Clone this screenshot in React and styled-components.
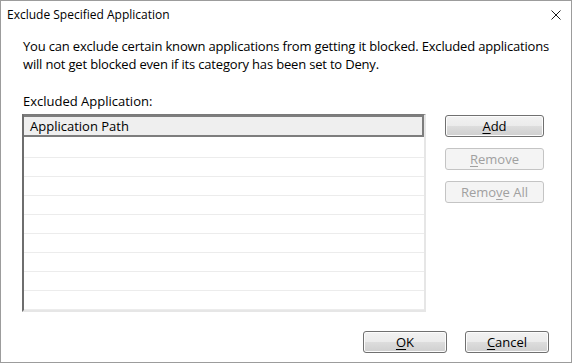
import React from 'react';
import styled, { createGlobalStyle } from 'styled-components';

const GlobalStyle = createGlobalStyle`
  html, body {
    margin: 0;
    padding: 0;
    background: #ffffff;
  }
  body {
    font-family: "Open Sans", "Noto Sans", sans-serif;
    color: #000000;
  }
`;

const rows = Array.from({ length: 9 });

function App() {
  return (
    <>
      <GlobalStyle />
      <Window>
        <TitleBar>
          <Title>Exclude Specified Application</Title>
          <CloseBtn aria-label="close">
            <svg width="10" height="10" viewBox="0 0 10 10">
              <path d="M0.5 0.5 L9.5 9.5 M9.5 0.5 L0.5 9.5" stroke="#1a1a1a" strokeWidth="1" fill="none" />
            </svg>
          </CloseBtn>
        </TitleBar>
        <Body>
          <Description>
            You can exclude certain known applications from getting it blocked. Excluded applications
            <br />
            will not get blocked even if its category has been set to Deny.
          </Description>
          <Label>Excluded Application:</Label>
          <ListRow>
            <Table>
              <HeaderCell>Application Path</HeaderCell>
              {rows.map((_, i) => (
                <Row key={i} />
              ))}
            </Table>
            <SideButtons>
              <Button>
                <u>A</u>dd
              </Button>
              <Button disabled>
                <u>R</u>emove
              </Button>
              <Button disabled>
                Remo<u>v</u>e All
              </Button>
            </SideButtons>
          </ListRow>
        </Body>
        <Footer>
          <Button $wide>
            <u>O</u>K
          </Button>
          <Button $wide>
            <u>C</u>ancel
          </Button>
        </Footer>
      </Window>
    </>
  );
}

export default App;

const Window = styled.div`
  width: 572px;
  height: 363px;
  box-sizing: border-box;
  border: 1px solid #9c9c9c;
  background: #ffffff;
  display: flex;
  flex-direction: column;
`;

const TitleBar = styled.div`
  height: 26px;
  display: flex;
  align-items: center;
  justify-content: space-between;
  padding: 0 10px 0 6px;
`;

const Title = styled.span`
  font-size: 12px;
  color: #000000;
`;

const CloseBtn = styled.div`
  width: 10px;
  height: 10px;
  display: flex;
  margin-top: 1px;
`;

const Body = styled.div`
  padding: 10px 0 0 21px;
  flex: 1;
`;

const Description = styled.p`
  margin: 0;
  font-size: 13px;
  line-height: 18px;
  letter-spacing: -0.18px;
  white-space: nowrap;
  padding-left: 1px;
`;

const Label = styled.div`
  margin-top: 19px;
  padding-left: 1px;
  font-size: 13px;
  line-height: 18px;
`;

const ListRow = styled.div`
  display: flex;
  align-items: flex-start;
  margin-top: 4px;
`;

const Table = styled.div`
  width: 404px;
  height: 198px;
  box-sizing: border-box;
  border-top: 1px solid #7a7a7a;
  border-left: 2px solid #6e6e6e;
  border-right: 2px solid #e6e6e6;
  border-bottom: 2px solid #e6e6e6;
  overflow: hidden;
`;

const HeaderCell = styled.div`
  height: 22px;
  box-sizing: border-box;
  border: 2px solid #7d7d7d;
  border-left: none;
  background: #efefef;
  font-size: 13px;
  line-height: 18px;
  padding-left: 6px;
  margin-bottom: 2px;
`;

const Row = styled.div`
  height: 19px;
  box-sizing: border-box;
  border-bottom: 1px solid #ececec;
`;

const SideButtons = styled.div`
  display: flex;
  flex-direction: column;
  gap: 11px;
  margin-left: 19px;
  margin-top: 1px;
`;

const Button = styled.button`
  width: ${(p) => (p.$wide ? '84px' : '99px')};
  height: 22px;
  box-sizing: border-box;
  padding: 0;
  font-family: "Open Sans", "Noto Sans", sans-serif;
  font-size: 13px;
  line-height: 18px;
  color: #000000;
  border: 1px solid #707070;
  border-radius: 3px;
  background: linear-gradient(#f2f2f2 0%, #ebebeb 50%, #dddddd 51%, #cfcfcf 100%);
  box-shadow: inset 0 0 0 1px #fcfcfc;

  &:disabled {
    color: #a0a0a0;
    border-color: #c4c4c4;
    background: #f4f4f4;
    box-shadow: none;
  }

  u {
    text-decoration-thickness: 1px;
    text-underline-offset: 2px;
  }
`;

const Footer = styled.div`
  display: flex;
  justify-content: flex-end;
  gap: 18px;
  padding: 0 22px 9px 0;
`;
